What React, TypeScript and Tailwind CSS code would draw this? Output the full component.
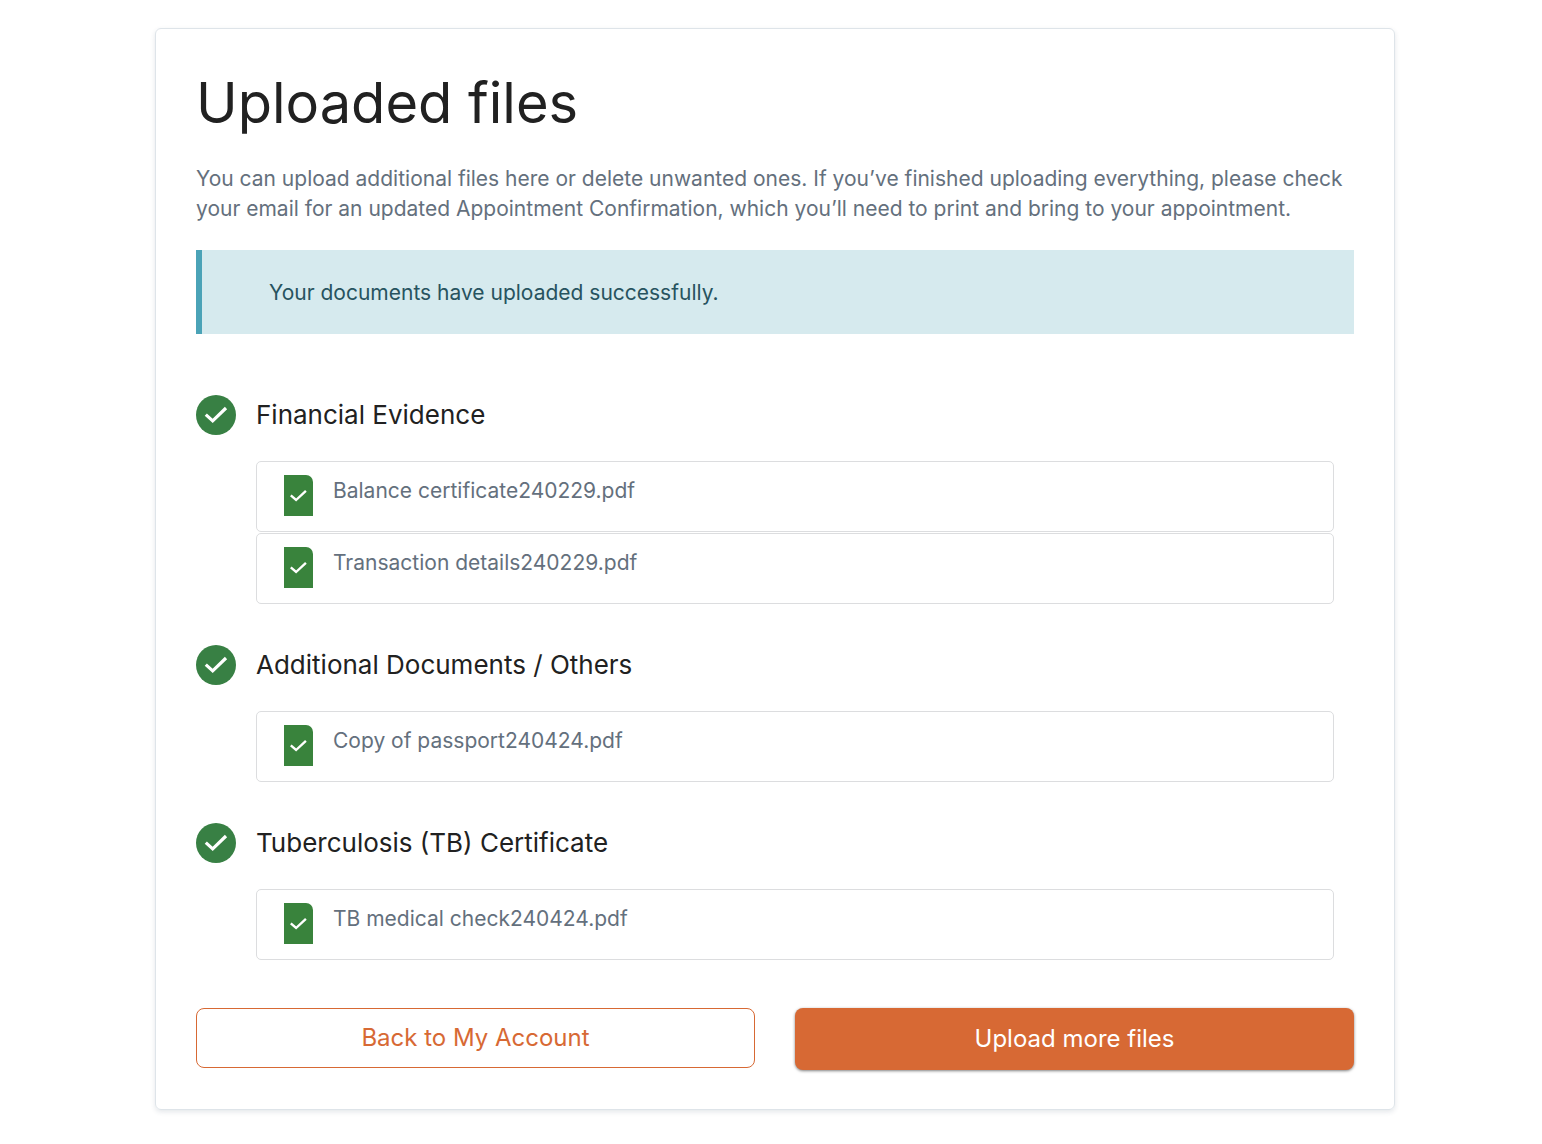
type UploadGroup = {
  title: string;
  files: string[];
};

const groups: UploadGroup[] = [
  {
    title: "Financial Evidence",
    files: ["Balance certificate240229.pdf", "Transaction details240229.pdf"],
  },
  {
    title: "Additional Documents / Others",
    files: ["Copy of passport240424.pdf"],
  },
  {
    title: "Tuberculosis (TB) Certificate",
    files: ["TB medical check240424.pdf"],
  },
];

function CheckCircle() {
  return (
    <svg className="size-10 shrink-0" viewBox="0 0 40 40" aria-hidden="true">
      <circle cx="20" cy="20" r="20" fill="#388044" />
      <path d="M9.8 19.6l6.9 6.3L30 13" fill="none" stroke="#fff" strokeWidth="3.2" />
    </svg>
  );
}

function FileIcon() {
  return (
    <svg className="h-[41px] w-[29px] shrink-0" viewBox="0 0 29 41" aria-hidden="true">
      <path d="M0 0h22a7 7 0 0 1 7 7v34H0z" fill="#39833c" />
      <path d="M6.8 20.3l5.3 4.7 9.8-9.2" fill="none" stroke="#fff" strokeWidth="2.4" />
    </svg>
  );
}

function FileRow({ name }: { name: string }) {
  return (
    <li className="flex h-[71px] items-start gap-5 rounded-[5px] border border-[#dcdddf] pl-[27px] pt-[13px]">
      <FileIcon />
      <span className="text-[21px] leading-8">{name}</span>
    </li>
  );
}

function FileGroup({ title, files }: UploadGroup) {
  return (
    <section>
      <div className="flex items-center gap-5">
        <CheckCircle />
        <h2 className="text-[26px] leading-10 text-[#212121]">{title}</h2>
      </div>
      <ul className="ml-[60px] mr-5 mt-[26px] flex flex-col gap-px">
        {files.map((file) => (
          <FileRow key={file} name={file} />
        ))}
      </ul>
    </section>
  );
}

export default function App() {
  return (
    <main className="min-h-screen bg-white py-7 pl-[155px] pr-[147px] font-[Inter,sans-serif] text-[#64707d]">
      <div className="rounded-md border border-[#dee4e9] px-10 pb-[39px] pt-10 shadow-[0_2px_5px_rgba(30,60,80,0.12)]">
        <h1 className="text-[56px] leading-[68px] text-[#212121]">Uploaded files</h1>
        <p className="mt-[27px] text-[21px] leading-[30px]">
          You can upload additional files here or delete unwanted ones. If you’ve finished uploading
          everything, please check your email for an updated Appointment Confirmation, which you’ll
          need to print and bring to your appointment.
        </p>
        <div
          className="mt-[26px] border-l-[6px] border-[#4ba3b7] bg-[#d6eaee] pb-[25px] pl-[67px] pt-[27px] text-[21px] leading-8 text-[#27535f]"
          role="status"
        >
          Your documents have uploaded successfully.
        </div>
        <div className="mt-[61px] flex flex-col gap-[41px]">
          {groups.map((group) => (
            <FileGroup key={group.title} {...group} />
          ))}
        </div>
        <div className="mt-12 grid grid-cols-2 items-start gap-10">
          <button
            className="h-[60px] rounded-lg border border-[#d76934] text-2xl text-[#d76934]"
            type="button"
          >
            Back to My Account
          </button>
          <button
            className="h-[62px] rounded-lg bg-[#d76934] text-2xl text-white shadow-[0_1px_3px_rgba(0,0,0,0.5)]"
            type="button"
          >
            Upload more files
          </button>
        </div>
      </div>
    </main>
  );
}
